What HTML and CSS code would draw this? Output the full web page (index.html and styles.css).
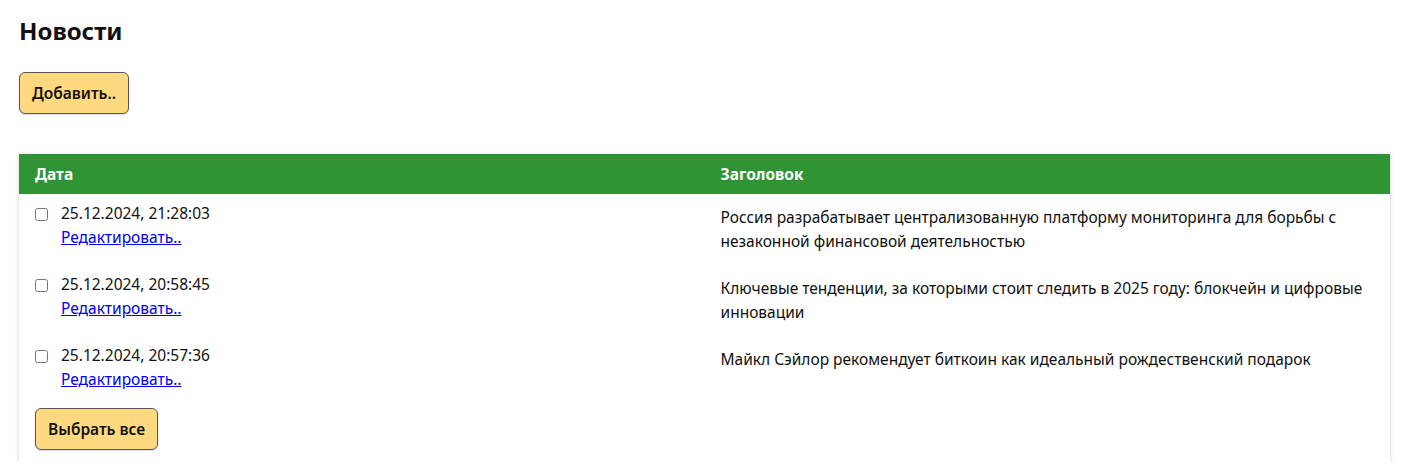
FILE: index.html
```html
<!doctype html>
<html lang="ru">
  <head>
    <meta charset="UTF-8" />
    <meta name="viewport" content="width=device-width, initial-scale=1.0" />
    <title>Новости</title>
    <link rel="stylesheet" href="styles.css">
  </head>
  <body>
    <div class="page">
      <h1>Новости</h1>
      <button class="btn">Добавить..</button>

      <div class="news-table">
        <div class="news-head">
          <div class="cell">Дата</div>
          <div class="cell">Заголовок</div>
        </div>

        <div class="news-row">
          <div class="date-cell">
            <input type="checkbox" />
            <div>
              <div>25.12.2024, 21:28:03</div>
              <a href="#">Редактировать..</a>
            </div>
          </div>
          <div class="title-cell">Россия разрабатывает централизованную платформу мониторинга для борьбы с незаконной финансовой деятельностью</div>
        </div>

        <div class="news-row">
          <div class="date-cell">
            <input type="checkbox" />
            <div>
              <div>25.12.2024, 20:58:45</div>
              <a href="#">Редактировать..</a>
            </div>
          </div>
          <div class="title-cell">Ключевые тенденции, за которыми стоит следить в 2025 году: блокчейн и цифровые инновации</div>
        </div>

        <div class="news-row">
          <div class="date-cell">
            <input type="checkbox" />
            <div>
              <div>25.12.2024, 20:57:36</div>
              <a href="#">Редактировать..</a>
            </div>
          </div>
          <div class="title-cell">Майкл Сэйлор рекомендует биткоин как идеальный рождественский подарок</div>
        </div>

        <div class="news-foot">
          <button class="btn">Выбрать все</button>
        </div>
      </div>
    </div>
  </body>
</html>
```

FILE: styles.css
```css
body {
  margin: 0;
  font-family: "Noto Sans", Arial, sans-serif;
  font-size: 15.5px;
  color: #111;
  background: #ffffff;
}
.page {
  padding: 0 26px 0 19px;
}
h1 {
  font-size: 24px;
  font-weight: 700;
  margin: 14px 0 24px;
  line-height: 34px;
}
.btn {
  font-family: inherit;
  font-size: 15.5px;
  font-weight: 600;
  color: #111;
  background-color: #ffd97f;
  border: 1px solid #555;
  border-radius: 6px;
  height: 42px;
  padding: 0 12px;
  cursor: pointer;
  box-shadow: 0 1px 2px rgba(0, 0, 0, 0.15);
}
.news-table {
  margin-top: 40px;
  background: #fff;
  box-shadow: 0 1px 4px rgba(0, 0, 0, 0.18);
}
.news-head,
.news-row {
  display: grid;
  grid-template-columns: 1fr 1fr;
}
.news-head {
  background-color: #2f9433;
  color: #fff;
  font-weight: 700;
  height: 40px;
  align-items: center;
}
.news-head .cell {
  padding: 0 16px;
}
.news-row {
  line-height: 24px;
}
.date-cell {
  display: flex;
  align-items: flex-start;
  padding: 7px 16px 16px;
}
.date-cell input {
  width: 13px;
  height: 13px;
  margin: 7px 13px 0 0;
}
.date-cell a {
  color: #0000ee;
}
.title-cell {
  padding: 11px 16px 0;
}
.news-foot {
  padding: 1px 16px 12px;
}
```
